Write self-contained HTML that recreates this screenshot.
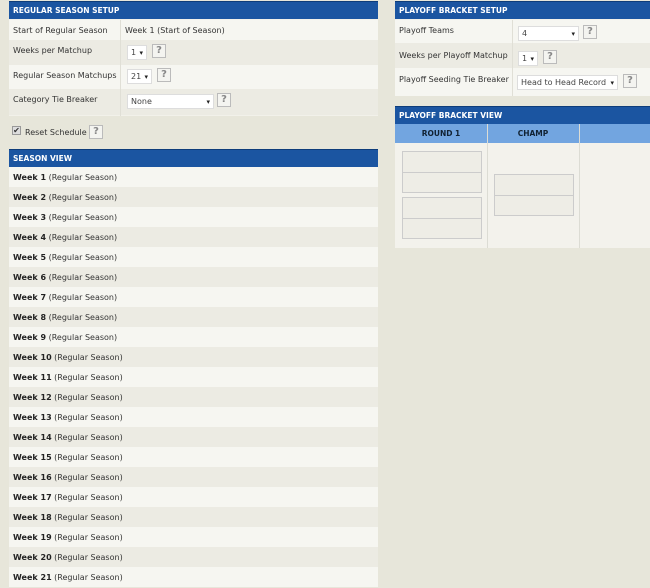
<!DOCTYPE html>
<html><head><style>
*{margin:0;padding:0;box-sizing:border-box}
body{width:650px;height:581px;overflow:hidden;background:#e7e6da;font-family:"DejaVu Sans","Liberation Sans",sans-serif;font-size:8px;color:#333;position:relative}
.abs{position:absolute}
.hdr{background:#1b55a1;color:#fff;font-weight:bold;font-size:7.5px;height:18px;line-height:18px;padding-left:4px;border-top:1px solid #0e3d7a}
.row{position:absolute;left:0;right:0}
.sel{position:absolute;background:#fff;border:1px solid #ddd;height:15px;line-height:14px;padding-left:3px;font-size:8px;color:#444}
.sel:after{content:"▾";position:absolute;right:3px;top:0;font-size:7px;color:#222}
.q{position:absolute;width:14px;height:14px;border:1px solid #bbb;background:#f4f4f0;color:#888;font-weight:bold;font-size:10px;line-height:12px;text-align:center}
.wk{position:absolute;left:9px;width:369px;height:20px;line-height:21px;padding-left:4px;font-size:8px}
.wk b{color:#222}
.box{position:absolute;width:80px;height:42px;border:1px solid #ccc;background:#eeede6}
.box:after{content:"";position:absolute;left:0;right:0;top:20px;border-top:1px solid #ccc}
</style></head><body>
<div class="abs" style="left:9px;top:1px;width:369px;height:115px;background:#f2f1ea">
<div class="hdr">REGULAR SEASON SETUP</div>
<div class="row" style="top:19px;height:20px;background:#f6f6f1"></div>
<div class="row" style="top:39px;height:25px;background:#ecebe3"></div>
<div class="row" style="top:64px;height:24px;background:#f6f6f1"></div>
<div class="row" style="top:88px;height:26px;background:#ecebe3"></div>
<div class="abs" style="left:111px;top:19px;width:1px;height:96px;background:#e0dfd6"></div>
<div class="abs" style="left:4px;top:25px">Start of Regular Season</div>
<div class="abs" style="left:116px;top:25px">Week 1 (Start of Season)</div>
<div class="abs" style="left:4px;top:45px">Weeks per Matchup</div>
<div class="sel" style="left:118px;top:44px;width:20px">1</div>
<div class="q" style="left:143px;top:43px">?</div>
<div class="abs" style="left:4px;top:70px">Regular Season Matchups</div>
<div class="sel" style="left:118px;top:68px;width:25px">21</div>
<div class="q" style="left:148px;top:67px">?</div>
<div class="abs" style="left:4px;top:94px">Category Tie Breaker</div>
<div class="sel" style="left:118px;top:93px;width:87px">None</div>
<div class="q" style="left:208px;top:92px">?</div>
</div>
<div class="abs" style="left:12px;top:126px;width:9px;height:9px;border:1px solid #999;background:#ddd;font-size:8px;line-height:8px;text-align:center">✔</div>
<div class="abs" style="left:25px;top:128px">Reset Schedule</div>
<div class="q" style="left:89px;top:125px">?</div>
<div class="abs hdr" style="left:9px;top:149px;width:369px">SEASON VIEW</div>
<div class="wk" style="top:167px;background:#f6f6f1"><b>Week 1</b> (Regular Season)</div>
<div class="wk" style="top:187px;background:#ecebe3"><b>Week 2</b> (Regular Season)</div>
<div class="wk" style="top:207px;background:#f6f6f1"><b>Week 3</b> (Regular Season)</div>
<div class="wk" style="top:227px;background:#ecebe3"><b>Week 4</b> (Regular Season)</div>
<div class="wk" style="top:247px;background:#f6f6f1"><b>Week 5</b> (Regular Season)</div>
<div class="wk" style="top:267px;background:#ecebe3"><b>Week 6</b> (Regular Season)</div>
<div class="wk" style="top:287px;background:#f6f6f1"><b>Week 7</b> (Regular Season)</div>
<div class="wk" style="top:307px;background:#ecebe3"><b>Week 8</b> (Regular Season)</div>
<div class="wk" style="top:327px;background:#f6f6f1"><b>Week 9</b> (Regular Season)</div>
<div class="wk" style="top:347px;background:#ecebe3"><b>Week 10</b> (Regular Season)</div>
<div class="wk" style="top:367px;background:#f6f6f1"><b>Week 11</b> (Regular Season)</div>
<div class="wk" style="top:387px;background:#ecebe3"><b>Week 12</b> (Regular Season)</div>
<div class="wk" style="top:407px;background:#f6f6f1"><b>Week 13</b> (Regular Season)</div>
<div class="wk" style="top:427px;background:#ecebe3"><b>Week 14</b> (Regular Season)</div>
<div class="wk" style="top:447px;background:#f6f6f1"><b>Week 15</b> (Regular Season)</div>
<div class="wk" style="top:467px;background:#ecebe3"><b>Week 16</b> (Regular Season)</div>
<div class="wk" style="top:487px;background:#f6f6f1"><b>Week 17</b> (Regular Season)</div>
<div class="wk" style="top:507px;background:#ecebe3"><b>Week 18</b> (Regular Season)</div>
<div class="wk" style="top:527px;background:#f6f6f1"><b>Week 19</b> (Regular Season)</div>
<div class="wk" style="top:547px;background:#ecebe3"><b>Week 20</b> (Regular Season)</div>
<div class="wk" style="top:567px;background:#f6f6f1"><b>Week 21</b> (Regular Season)</div>
<div class="abs" style="left:395px;top:1px;width:255px;height:95px;background:#f2f1ea">
<div class="hdr">PLAYOFF BRACKET SETUP</div>
<div class="row" style="top:19px;height:23px;background:#f6f6f1"></div>
<div class="row" style="top:42px;height:25px;background:#ecebe3"></div>
<div class="row" style="top:67px;height:28px;background:#f6f6f1"></div>
<div class="abs" style="left:117px;top:19px;width:1px;height:76px;background:#e0dfd6"></div>
<div class="abs" style="left:4px;top:25px">Playoff Teams</div>
<div class="sel" style="left:123px;top:25px;width:61px">4</div>
<div class="q" style="left:188px;top:24px">?</div>
<div class="abs" style="left:4px;top:50px">Weeks per Playoff Matchup</div>
<div class="sel" style="left:123px;top:50px;width:20px">1</div>
<div class="q" style="left:148px;top:49px">?</div>
<div class="abs" style="left:4px;top:74px">Playoff Seeding Tie Breaker</div>
<div class="sel" style="left:122px;top:74px;width:101px;font-size:8px">Head to Head Record</div>
<div class="q" style="left:228px;top:73px">?</div>
</div>
<div class="abs hdr" style="left:395px;top:106px;width:255px">PLAYOFF BRACKET VIEW</div>
<div class="abs" style="left:395px;top:124px;width:255px;height:19px;background:#72a5e0"></div>
<div class="abs" style="left:395px;top:129px;width:92px;text-align:center;font-weight:bold;font-size:7.5px;color:#123">ROUND 1</div>
<div class="abs" style="left:487px;top:129px;width:92px;text-align:center;font-weight:bold;font-size:7.5px;color:#123">CHAMP</div>
<div class="abs" style="left:395px;top:143px;width:255px;height:105px;background:#f3f2ec"></div>
<div class="abs" style="left:487px;top:124px;width:1px;height:124px;background:#dcdcd4"></div>
<div class="abs" style="left:579px;top:124px;width:1px;height:124px;background:#dcdcd4"></div>
<div class="box" style="left:402px;top:151px"></div>
<div class="box" style="left:402px;top:197px"></div>
<div class="box" style="left:494px;top:174px"></div>
</body></html>
